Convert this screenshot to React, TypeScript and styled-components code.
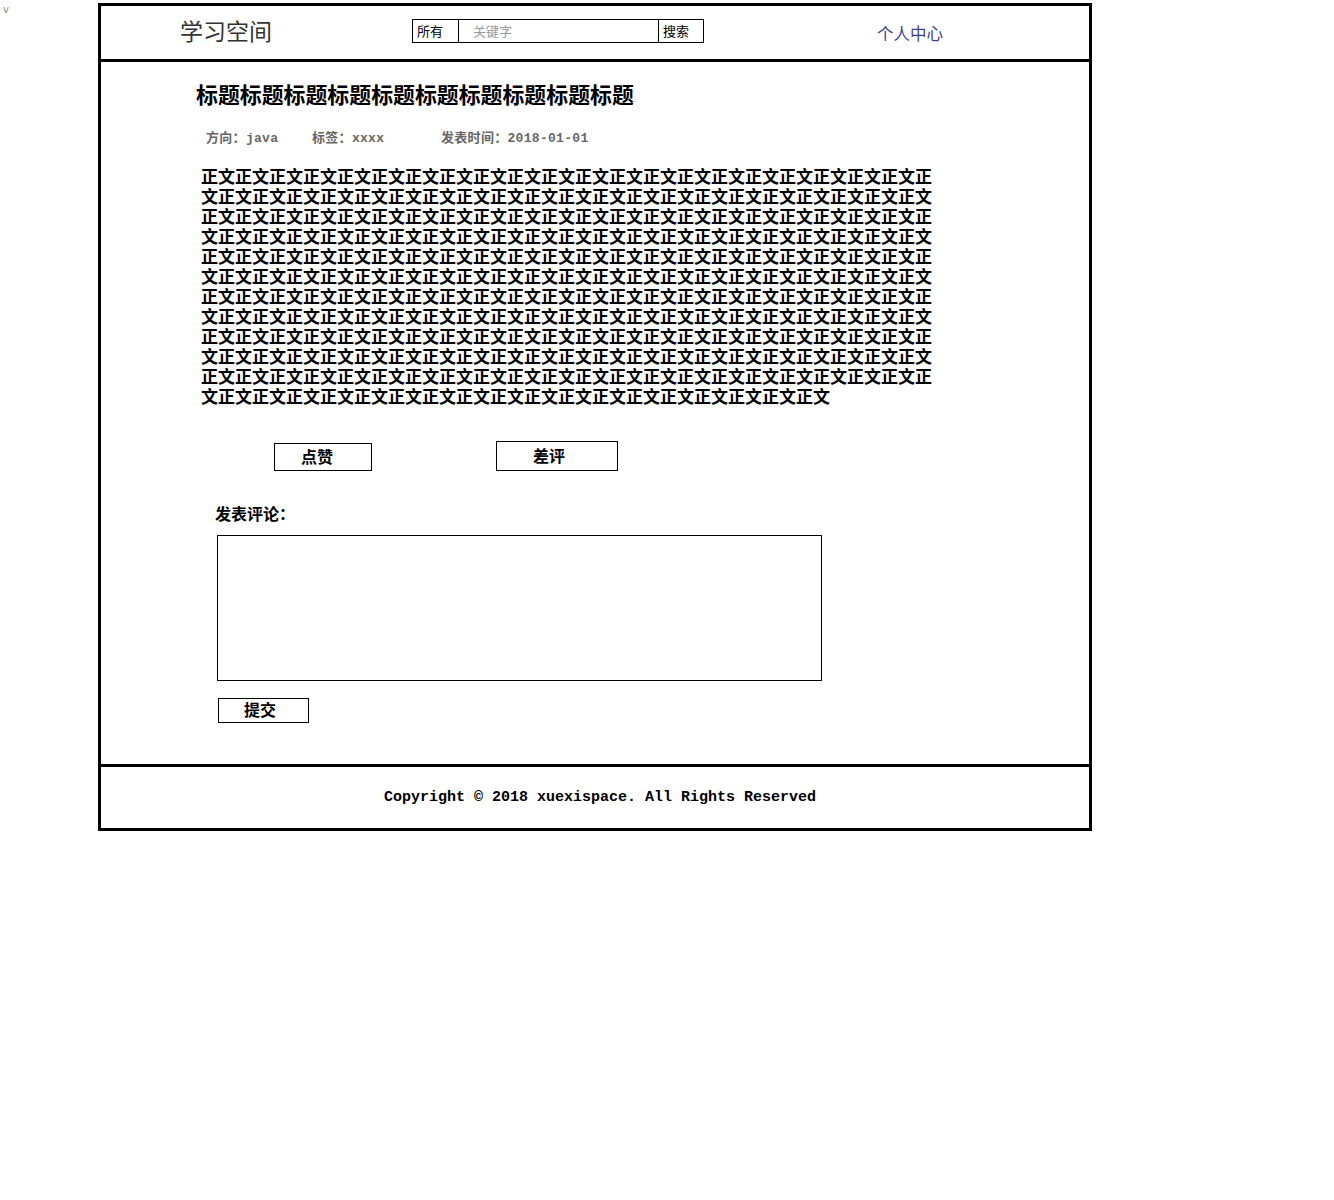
import React from 'react';
import styled, { createGlobalStyle } from 'styled-components';

const GlobalStyle = createGlobalStyle`
  html, body {
    margin: 0;
    padding: 0;
    background: #fff;
  }
  body {
    font-family: 'Noto Sans CJK SC', 'Liberation Sans', sans-serif;
    color: #000;
  }
`;

const Corner = styled.div`
  position: absolute;
  left: 3px;
  top: 4px;
  font-family: 'DejaVu Sans', sans-serif;
  font-size: 10px;
  color: #888;
`;

const Frame = styled.div`
  width: 988px;
  margin: 3px 0 0 98px;
  border: 3px solid #000;
  display: flex;
  flex-direction: column;
`;

const Header = styled.header`
  height: 53px;
  border-bottom: 3px solid #000;
  display: flex;
  align-items: center;
  padding-left: 79px;
`;

const Logo = styled.div`
  width: 232px;
  font-size: 23px;
  color: #333;
  font-weight: 400;
  margin-top: -6px;
`;

const Search = styled.div`
  width: 290px;
  height: 22px;
  border: 1px solid #000;
  display: flex;
  font-size: 13px;
  margin-top: -4px;
`;

const SearchPart = styled.div<{ $w: number; $muted?: boolean }>`
  width: ${p => p.$w}px;
  display: flex;
  align-items: center;
  padding-left: ${p => (p.$muted ? 14 : 4)}px;
  box-sizing: border-box;
  color: ${p => (p.$muted ? '#999' : '#000')};
  & + & {
    border-left: 1px solid #000;
  }
`;

const UserLink = styled.a`
  margin-left: 173px;
  font-size: 16.5px;
  color: #3b3f8c;
  text-decoration: none;
`;

const Main = styled.main`
  height: 705px;
  border-bottom: 3px solid #000;
  padding: 17px 0 0 95px;
  box-sizing: border-box;
  display: flex;
  flex-direction: column;
`;

const Title = styled.h1`
  margin: 0;
  font-size: 21.9px;
  line-height: 30px;
  font-weight: 700;
  font-family: 'Noto Sans CJK SC', serif;
`;

const Meta = styled.div`
  display: flex;
  margin: 20px 0 0 10px;
  font-family: 'Liberation Mono', 'Noto Sans CJK SC', monospace;
  font-size: 13px;
  line-height: 20px;
  font-weight: 700;
  color: #666;
  letter-spacing: 0.3px;
`;

const MetaItem = styled.span<{ $w: number }>`
  width: ${p => p.$w}px;
  flex: none;
`;

const Body = styled.p`
  margin: 17px 0 0 5px;
  width: 732px;
  font-size: 17px;
  line-height: 20px;
  font-weight: 700;
  word-break: break-all;
  letter-spacing: 0;
`;

const Votes = styled.div`
  display: flex;
  align-items: flex-end;
  margin: 35px 0 0 78px;
`;

const Btn = styled.button<{ $w: number; $h: number; $shift: number }>`
  width: ${p => p.$w}px;
  height: ${p => p.$h}px;
  border: 1px solid #000;
  background: #fff;
  font-family: 'Noto Sans CJK SC', sans-serif;
  font-size: 16px;
  font-weight: 700;
  line-height: 1;
  padding: 0 ${p => p.$shift}px 3px 0;
  color: #000;
`;

const VoteGap = styled.div`
  width: 124px;
`;

const Label = styled.div`
  margin: 30px 0 0 19px;
  font-size: 16px;
  font-weight: 700;
  line-height: 24px;
`;

const TextArea = styled.textarea`
  margin: 10px 0 0 21px;
  width: 605px;
  height: 146px;
  border: 1px solid #000;
  box-sizing: border-box;
  resize: none;
  outline: none;
`;

const Submit = styled(Btn)`
  margin: 17px 0 0 22px;
`;

const Footer = styled.footer`
  height: 61px;
  display: flex;
  align-items: center;
  justify-content: center;
  padding-left: 10px;
  font-family: 'Liberation Mono', monospace;
  font-size: 15px;
  font-weight: 700;
`;

const body = '正文'.repeat(255);

export default function App() {
  return (
    <>
      <GlobalStyle />
      <Corner>v</Corner>
      <Frame>
        <Header>
          <Logo>学习空间</Logo>
          <Search>
            <SearchPart $w={45}>所有</SearchPart>
            <SearchPart $w={200} $muted>关键字</SearchPart>
            <SearchPart $w={45}>搜索</SearchPart>
          </Search>
          <UserLink href="#">个人中心</UserLink>
        </Header>
        <Main>
          <Title>{'标题'.repeat(10)}</Title>
          <Meta>
            <MetaItem $w={106}>方向：java</MetaItem>
            <MetaItem $w={129}>标签：xxxx</MetaItem>
            <MetaItem $w={200}>发表时间：2018-01-01</MetaItem>
          </Meta>
          <Body>{body}</Body>
          <Votes>
            <Btn $w={98} $h={28} $shift={12}>点赞</Btn>
            <VoteGap />
            <Btn $w={122} $h={30} $shift={16}>差评</Btn>
          </Votes>
          <Label>发表评论：</Label>
          <TextArea />
          <Submit $w={91} $h={25} $shift={7}>提交</Submit>
        </Main>
        <Footer>Copyright © 2018 xuexispace. All Rights Reserved</Footer>
      </Frame>
    </>
  );
}
